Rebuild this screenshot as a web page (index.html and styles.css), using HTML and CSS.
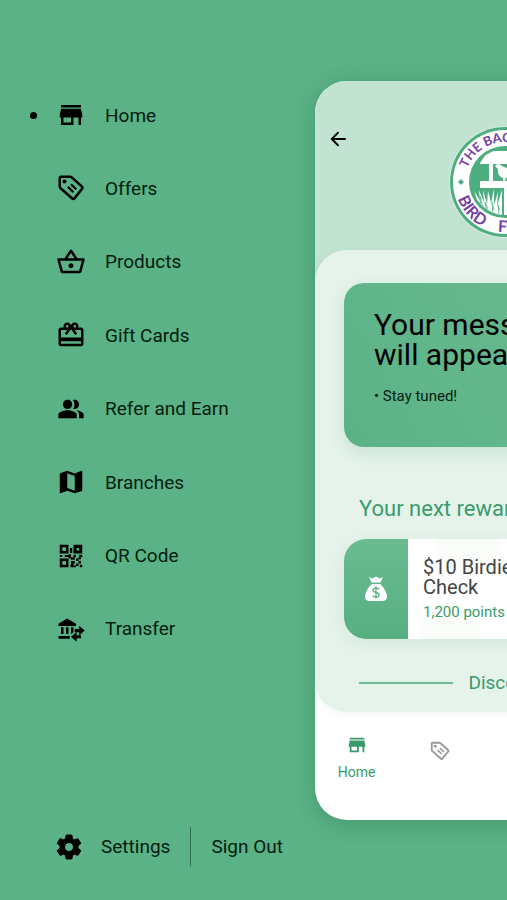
FILE: index.html
```html
<!DOCTYPE html>
<html lang="en">
<head>
    <meta charset="UTF-8">
    <meta name="viewport" content="width=device-width, initial-scale=1.0">
    <title>The Backyard Bird Feeder</title>
    <link rel="stylesheet" href="styles.css">
</head>
<body>
    <svg class="defs" aria-hidden="true">
        <symbol id="icon-store" viewBox="0 0 24 24">
            <path d="M20 4H4v2h16V4zm1 10v-2l-1-5H4l-1 5v2h1v6h10v-6h4v6h2v-6h1zm-9 4H6v-4h6v4z"/>
        </symbol>
        <symbol id="icon-tag" viewBox="0 0 24 24">
            <g fill="none" stroke="currentColor" stroke-width="2" stroke-linejoin="round">
                <path d="M3 4Q3 3 4 3H11.300Q12 3 12.600 3.500L20.800 10.900Q21.700 11.700 20.900 12.600L14.700 20.300Q13.900 21.200 13 20.400L3.700 12.200Q3 11.600 3 10.800Z"/>
                <path d="M12 9L16.200 13M9.500 11L13.800 15.300" stroke-width="1.700"/>
            </g>
            <circle cx="6.800" cy="6.800" r="1.600"/>
        </symbol>
    </svg>

    <div class="drawer">
        <nav class="menu">
            <a href="#" class="active">
                <svg class="icon"><use href="#icon-store"/></svg>
                Home
            </a>
            <a href="#">
                <svg class="icon"><use href="#icon-tag"/></svg>
                Offers
            </a>
            <a href="#">
                <svg class="icon" viewBox="0 0 24 24"><path d="M22 9h-4.790l-4.380-6.560c-.190-.280-.510-.420-.830-.420s-.640.140-.830.430L6.790 9H2c-.550 0-1 .450-1 1 0 .090.010.180.040.270l2.540 9.270c.230.840 1 1.460 1.920 1.460h13c.920 0 1.690-.620 1.930-1.460l2.540-9.270L23 10c0-.550-.450-1-1-1zM12 4.800L14.800 9H9.200L12 4.800zM18.500 19l-12.990.010L3.310 11H20.700l-2.200 8zM12 13c-1.100 0-2 .900-2 2s.900 2 2 2 2-.900 2-2-.900-2-2-2z"/></svg>
                Products
            </a>
            <a href="#">
                <svg class="icon" viewBox="0 0 24 24"><path d="M20 6h-2.180c.110-.310.180-.650.180-1 0-1.660-1.340-3-3-3-1.050 0-1.960.540-2.500 1.350l-.500.670-.500-.680C10.960 2.540 10.050 2 9 2 7.340 2 6 3.340 6 5c0 .350.070.690.180 1H4c-1.110 0-1.990.890-1.990 2L2 19c0 1.110.890 2 2 2h16c1.110 0 2-.890 2-2V8c0-1.110-.890-2-2-2zm-5-2c.550 0 1 .450 1 1s-.450 1-1 1-1-.450-1-1 .450-1 1-1zM9 4c.550 0 1 .450 1 1s-.450 1-1 1-1-.450-1-1 .450-1 1-1zm11 15H4v-2h16v2zm0-5H4V8h5.080L7 10.830 8.620 12 12 7.400l3.380 4.600L17 10.830 14.920 8H20v6z"/></svg>
                Gift Cards
            </a>
            <a href="#">
                <svg class="icon" viewBox="-1 -1 26 26"><path d="M16.670 13.130C18.040 14.060 19 15.320 19 17v3h4v-3c0-2.180-3.570-3.470-6.330-3.870zM15 12c2.210 0 4-1.790 4-4s-1.790-4-4-4c-.470 0-.910.100-1.330.240C14.500 5.270 15 6.580 15 8s-.500 2.730-1.330 3.760c.420.140.860.240 1.330.240zM9 12c2.210 0 4-1.790 4-4s-1.790-4-4-4-4 1.790-4 4 1.790 4 4 4zM9 13c-2.670 0-8 1.340-8 4v3h16v-3c0-2.660-5.330-4-8-4z"/></svg>
                Refer and Earn
            </a>
            <a href="#">
                <svg class="icon" viewBox="0 0 24 24"><path d="M20.500 3l-.160.030L15 5.100 9 3 3.360 4.900c-.210.070-.360.250-.360.480V20.500c0 .280.220.500.500.500l.160-.030L9 18.900l6 2.100 5.640-1.900c.210-.070.360-.250.360-.480V3.500c0-.280-.220-.500-.500-.500zM15 19l-6-2.110V5l6 2.110V19z"/></svg>
                Branches
            </a>
            <a href="#">
                <svg class="icon" viewBox="0 0 24 24"><path fill-rule="evenodd" d="M3 3h7v7H3zM5 5v3h3V5zM14 3h7v7h-7zM16.500 5.500v2h2v-2zM3 14h7v7H3zM5 16v3h3v-3zM11.200 5.500h1.800v4h-1.800zM3 11.200h2v1.600H3zM7 11.200h3v1.600H7zM10 10.500h2v2.500h3v2h-3v-1h-2zM14 11h2v2h-2zM18.500 11h2.500v2h-2.500zM16 14h2v2h-2zM18 12.500h2v2h-2zM12 16h3v2h-1v3h-2.500v-2h.500zM18 16h2v2h-2zM16 18h2v2h-2zM19 19h2v2h-2zM14 19.500h2v1.500h-2z"/></svg>
                QR Code
            </a>
            <a href="#">
                <svg class="icon" viewBox="0 0 24 24"><path d="M2 7.800L9 3.500l7 4.300V9.500H2zM4 10.500h2v5.500H4zM8 10.500h2v5.500H8zM12 10.500h2v4l-2 1.500zM2 17.500h9v2.200H2zM15 12h3.500V9.300l4.500 3.900-4.500 3.900v-2.600H15zM20 17h-3.500v-2.700l-4.500 3.900 4.500 3.900v-2.700H20z"/></svg>
                Transfer
            </a>
        </nav>
        <div class="drawer-footer">
            <a href="#" class="settings">
                <svg class="icon" viewBox="0 0 24 24"><path d="M19.140 12.940c.040-.300.060-.610.060-.940 0-.320-.020-.640-.070-.940l2.030-1.580c.180-.140.230-.410.120-.610l-1.920-3.320c-.120-.220-.370-.290-.590-.220l-2.390.960c-.500-.380-1.030-.700-1.620-.940l-.360-2.540c-.040-.240-.240-.410-.480-.410h-3.840c-.240 0-.430.170-.470.410l-.360 2.540c-.590.240-1.130.570-1.620.940l-2.390-.960c-.220-.080-.470 0-.590.220L2.740 8.870c-.120.210-.080.470.120.610l2.030 1.580c-.050.300-.090.630-.090.940s.020.640.070.940l-2.030 1.580c-.180.140-.230.410-.120.610l1.920 3.320c.120.220.370.290.590.220l2.390-.960c.500.380 1.030.700 1.620.940l.360 2.540c.050.240.240.410.480.410h3.840c.240 0 .440-.170.470-.410l.360-2.540c.590-.240 1.130-.560 1.620-.940l2.390.960c.220.080.470 0 .590-.220l1.920-3.320c.120-.220.070-.470-.120-.610l-2.010-1.580zM12 15.600c-1.980 0-3.600-1.620-3.600-3.600s1.620-3.600 3.600-3.600 3.600 1.620 3.600 3.600-1.620 3.600-3.600 3.600z" stroke="currentColor" stroke-width=".8" stroke-linejoin="round"/></svg>
                Settings
            </a>
            <a href="#" class="sign-out">Sign Out</a>
        </div>
    </div>

    <main class="screen">
        <header class="screen-header">
            <button class="back-btn" aria-label="Back">
                <svg viewBox="0 0 24 24"><path d="M20.500 12H4.500M12 4.500L4.500 12L12 19.500" fill="none" stroke="currentColor" stroke-width="2.200" stroke-linecap="round" stroke-linejoin="round"/></svg>
            </button>
            <svg class="logo" viewBox="0 0 112 112">
                <defs>
                    <path id="arc-top" d="M16 56a40 40 0 0 1 80 0"/>
                    <path id="arc-bottom" d="M6 56a50 50 0 0 0 100 0"/>
                    <clipPath id="logo-inner"><circle cx="56" cy="56" r="33"/></clipPath>
                </defs>
                <circle cx="56" cy="56" r="56" fill="#d6eee1"/>
                <circle cx="56" cy="56" r="55" fill="#4fae80"/>
                <circle cx="56" cy="56" r="52" fill="#fff"/>
                <circle cx="56" cy="56" r="36" fill="#4fae80"/>
                <g clip-path="url(#logo-inner)" fill="#fff">
                    <path d="M31 37L39 25H73L81 37V38H72V55H81V62H60V95H55V62H31V55H40V38H31Z"/>
                    <path d="M44 38H68V55H44Z" fill="#4fae80"/>
                    <path d="M46 40Q49 36 53 40L66 46L57 52L56 55H54V52Q48 50 49 43Z"/>
                    <path d="M29 86L26 66L31 75L30 64L35 77L34 64L38 78L39 65L42 77L45 63L45 79L49 66L48 80L53 64L53 90H29Z"/>
                    <path d="M32 80L31 70L34 82M38 87L36 76L39 83M44 88L43 76L45 84M50 88L49 79L51 84" fill="none" stroke="#4fae80" stroke-width=".8"/>
                    <path d="M62 90V66L66 78L70 65L72 79L77 66L78 78L84 65V88Z"/>
                </g>
                <path d="M12 53L15 56L12 59L9 56Z" fill="#4fae80"/>
                <g class="logo-text">
                    <text class="logo-top"><textPath href="#arc-top" startOffset="14">THE BACKYARD</textPath></text>
                    <text><textPath href="#arc-bottom" startOffset="17">BIRD</textPath></text>
                    <text><textPath href="#arc-bottom" startOffset="71">FEEDER</textPath></text>
                </g>
            </svg>
        </header>

        <div class="sheet">
            <section class="message-card">
                <h1>Your messages<br>will appear here</h1>
                <p>• Stay tuned!</p>
            </section>

            <h2>Your next reward</h2>
            <section class="reward-card">
                <div class="reward-icon">
                    <svg viewBox="0 0 24 26">
                        <path d="M5 1L8.500 2.500L12 0.500L15.500 2.500L19 1L16.500 6.500H7.500Z" fill="#fff"/>
                        <path d="M8 8H16C20 11 23 17 23 21Q23 25 18 25H6Q1 25 1 21C1 17 4 11 8 8Z" fill="#fff"/>
                        <path d="M15 13.500Q14.500 12 12 12T9 14Q9 16 12 16.500T15 19Q15 21 12 21T9 19.500M12 10.500V22.500" fill="none" stroke="#5ab286" stroke-width="1.300"/>
                    </svg>
                </div>
                <div class="reward-info">
                    <h3>$10 Birdie<br>Check</h3>
                    <p>1,200 points</p>
                </div>
            </section>

            <div class="divider"><span>Discover</span></div>
        </div>

        <nav class="tabs">
            <a href="#" class="active">
                <svg class="tab-icon"><use href="#icon-store"/></svg>
                Home
            </a>
            <a href="#" aria-label="Offers">
                <svg class="tab-icon"><use href="#icon-tag"/></svg>
            </a>
        </nav>
    </main>
</body>
</html>
```

FILE: styles.css
```css
* {
    box-sizing: border-box;
}
body {
    margin: 0;
    min-height: 100vh;
    display: flex;
    overflow: hidden;
    background: #5bb286;
    font-family: Roboto, "Liberation Sans", sans-serif;
}
h1, h2, h3, p {
    margin: 0;
    font-weight: 400;
}
a {
    color: inherit;
    text-decoration: none;
}
svg {
    display: block;
    fill: currentColor;
}
.defs {
    position: absolute;
    width: 0;
    height: 0;
}

/* side menu */
.drawer {
    flex: none;
    width: 315px;
    display: flex;
    flex-direction: column;
    padding: 100px 0 34px;
    color: #021c0e;
    font-size: 19px;
}
.icon {
    flex: none;
    width: 30px;
    height: 30px;
    color: #000;
}
.menu {
    flex: 1;
    display: flex;
    flex-direction: column;
    justify-content: space-between;
    margin-bottom: 183px;
}
.menu a {
    display: flex;
    align-items: center;
    gap: 19px;
    padding-left: 56px;
}
.menu a.active {
    padding-left: 30px;
}
.menu a.active::before {
    content: "";
    width: 7px;
    height: 7px;
    border-radius: 50%;
    background: #000;
}
.drawer-footer {
    display: flex;
    align-items: center;
    padding-left: 54px;
}
.settings {
    display: flex;
    align-items: center;
    gap: 17px;
    padding-right: 20px;
}
.sign-out {
    line-height: 39px;
    padding-left: 20px;
    border-left: 1px solid #2f7150;
}

/* app screen, pushed aside by the menu */
.screen {
    flex: none;
    align-self: flex-start;
    width: 380px;
    margin-top: 81px;
    border-radius: 32px;
    overflow: hidden;
    background: #fff;
    box-shadow: 0 4px 20px rgba(0, 70, 35, 0.25);
}
.screen-header {
    display: grid;
    grid-template-columns: 1fr auto 1fr;
    align-items: start;
    padding: 45px 10px 44px;
    background: #c2e3d1;
}
.back-btn {
    justify-self: start;
    padding: 3px;
    border: none;
    background: none;
    color: #000;
    cursor: pointer;
}
.back-btn svg {
    width: 20px;
    height: 20px;
}
.logo {
    width: 112px;
    height: 112px;
}
.logo-text {
    fill: #7440a6;
    font-family: Lato, "Open Sans", sans-serif;
    font-size: 16px;
    font-weight: 700;
}
.logo-top {
    font-size: 13px;
}
.sheet {
    margin-top: -32px;
    padding: 33px 29px 17px;
    border-radius: 32px;
    background: #e5f3eb;
    box-shadow: 0 2px 6px rgba(60, 140, 100, 0.08);
}
.message-card {
    padding: 27px 30px 41px;
    border-radius: 20px;
    background: linear-gradient(60deg, #5bb286, #6dbd93);
    box-shadow: 0 6px 16px rgba(60, 150, 100, 0.16);
    color: #021c0e;
}
.message-card h1 {
    font-size: 30px;
    line-height: 30px;
    color: #000;
}
.message-card p {
    margin-top: 16px;
    font-size: 15px;
    line-height: 20px;
}
.sheet h2 {
    margin: 48px 15px 16px;
    font-size: 22px;
    line-height: 28px;
    color: #3a9c6c;
}
.reward-card {
    display: flex;
    border-radius: 22px;
    overflow: hidden;
    background: radial-gradient(circle at 124px 0, #fafcfa 33px, transparent 34px),
        radial-gradient(circle at 106px 94px, #fafcfa 30px, transparent 31px), #fff;
    box-shadow: 0 4px 16px rgba(60, 150, 100, 0.1);
}
.reward-icon {
    width: 64px;
    display: grid;
    place-items: center;
    background: linear-gradient(#6abb91, #56af81);
}
.reward-icon svg {
    width: 24px;
    height: 26px;
}
.reward-info {
    padding: 18px 15px 17px;
}
.reward-info h3 {
    font-size: 20px;
    line-height: 20px;
    color: #444;
}
.reward-info p {
    margin-top: 5px;
    font-size: 15px;
    line-height: 20px;
    color: #3a9c6c;
}
.divider {
    display: flex;
    align-items: center;
    gap: 15px;
    margin: 32px 15px 0;
    font-size: 19px;
    line-height: 24px;
    color: #3a9c6c;
}
.divider::before,
.divider::after {
    content: "";
    flex: 1;
    height: 2px;
    background: #6eba94;
}
.tabs {
    display: flex;
    padding: 22px 0 38px;
}
.tabs a {
    width: 83px;
    display: flex;
    flex-direction: column;
    align-items: center;
    font-size: 14px;
    line-height: 20px;
    color: #999;
}
.tabs a.active {
    gap: 6px;
    color: #3a9c6c;
}
.tab-icon {
    width: 22px;
    height: 22px;
}
.tabs a:not(.active) {
    padding-top: 6px;
}
```
